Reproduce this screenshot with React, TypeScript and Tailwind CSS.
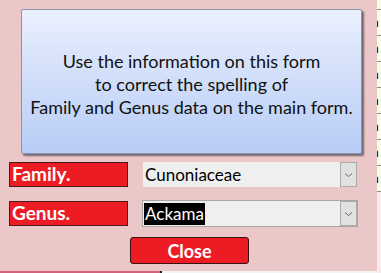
const ROWS = [0, 1, 2, 3, 4, 5, 6];

function Chevron() {
  return (
    <svg width="9" height="6" viewBox="0 0 9 6" className="block">
      <path d="M1 1.5 L4.5 4.5 L8 1.5" fill="none" stroke="#6b6b6b" strokeWidth="1" />
    </svg>
  );
}

function Combo({ value, focused }: { value: string; focused?: boolean }) {
  return (
    <div
      className={
        focused
          ? 'flex h-[27px] w-[216px] items-stretch border border-[#a6a6a6] bg-[#efefef]'
          : 'flex h-[25px] w-[214px] items-stretch bg-[#efefef]'
      }
    >
      <div className="flex flex-1 items-center pl-[1px]">
        <span
          className={
            focused
              ? 'bg-black px-[1px] text-[17px] leading-[22px] text-white'
              : 'px-[1px] text-[17px] leading-[22px] text-black'
          }
        >
          {value}
        </span>
      </div>
      <div className="flex w-[17px] items-center justify-center border border-[#ababab] bg-[#e1e1e1]">
        <Chevron />
      </div>
    </div>
  );
}

export default function App() {
  return (
    <div className="flex h-[273px] w-[381px] overflow-hidden bg-[#f7eded]" style={{ fontFamily: 'Lato, "Noto Sans", sans-serif' }}>
      <div className="flex w-[377px] shrink-0 flex-col">
        <div className="flex h-[271px] flex-col bg-[#ecc7c7]">
          <div className="pl-[21px] pt-[9px]">
            <div className="flex h-[145px] w-[341px] flex-col items-center justify-center rounded-[2px] border border-[#8a93aa] bg-gradient-to-b from-[#eaf0fd] to-[#b7ccf6] pt-[5px] text-center text-[18px] leading-[23px] text-[#111] shadow-[2px_2px_2px_rgba(60,60,80,0.7)]">
              <div>Use the information on this form</div>
              <div>to correct the spelling of</div>
              <div>Family and Genus data on the main form.</div>
            </div>
          </div>

          <div className="mt-[8px] flex items-center pl-[9px]">
            <div className="flex h-[25px] w-[119px] items-center border border-[#4a1a1a] bg-[#ed1c24] pl-[2px] text-[19px] font-bold text-white">
              Family.
            </div>
            <div className="ml-[15px]">
              <Combo value="Cunoniaceae" />
            </div>
          </div>

          <div className="mt-[13px] flex items-center pl-[9px]">
            <div className="flex h-[25px] w-[119px] items-center border border-[#4a1a1a] bg-[#ed1c24] pl-[2px] text-[19px] font-bold text-white">
              Genus.
            </div>
            <div className="ml-[14px]">
              <Combo value="Ackama" focused />
            </div>
          </div>

          <div className="mt-[10px] flex pl-[130px]">
            <button
              type="button"
              className="h-[27px] w-[119px] rounded-[3px] border border-[#3a1010] bg-[#ed1c24] text-[18px] font-bold leading-none text-white"
            >
              Close
            </button>
          </div>
        </div>
        <div className="flex h-[2px]">
          <div className="w-[160px] bg-[#d4607c]" />
          <div className="w-[2px] bg-[#222]" />
          <div className="flex-1 bg-[#f4f4f4]" />
        </div>
      </div>

      <div className="flex w-[4px] shrink-0 flex-col">
        <div className="h-[9px] bg-[#f8fde6]" />
        {ROWS.map((r) => (
          <div key={r} className="relative h-[26px] overflow-hidden border-t border-[#8c8c8c] bg-[#f8fde6]">
            <span className="absolute left-[-6px] top-[5px] text-[14px] leading-none text-black">n</span>
          </div>
        ))}
        <div className="flex-1 border-t border-[#8c8c8c] bg-[#f7eded]" />
      </div>
    </div>
  );
}
